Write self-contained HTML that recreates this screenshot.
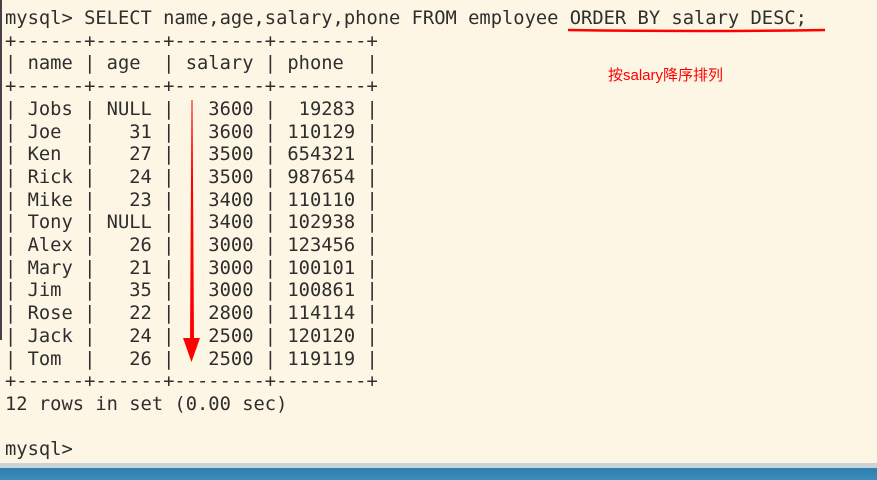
<!DOCTYPE html>
<html><head><meta charset="utf-8"><style>
html,body{margin:0;padding:0}
body{width:877px;height:480px;background:#fdf6e4;position:relative;overflow:hidden}
pre{position:absolute;left:5px;top:8px;margin:0;font-family:"DejaVu Sans Mono","Liberation Mono",monospace;font-size:18.6px;line-height:22.7px;color:#2e2e2e;transform:scaleX(1.009);transform-origin:0 0}
.lb{position:absolute;left:0;top:0;width:2px;height:340px;background:#444}
.bar1{position:absolute;left:0;top:463px;width:877px;height:5px;background:#c9d3d8}
.bar2{position:absolute;left:0;top:468px;width:877px;height:12px;background:linear-gradient(#2f7fae,#3a8cba)}
.note{position:absolute;left:608px;top:64px;font-family:"Liberation Sans","Noto Sans CJK SC",sans-serif;font-size:15px;color:#f00}
</style></head><body>
<div class="lb"></div>
<pre>mysql&gt; SELECT name,age,salary,phone FROM employee ORDER BY salary DESC;
+------+------+--------+--------+
| name | age  | salary | phone  |
+------+------+--------+--------+
| Jobs | NULL |   3600 |  19283 |
| Joe  |   31 |   3600 | 110129 |
| Ken  |   27 |   3500 | 654321 |
| Rick |   24 |   3500 | 987654 |
| Mike |   23 |   3400 | 110110 |
| Tony | NULL |   3400 | 102938 |
| Alex |   26 |   3000 | 123456 |
| Mary |   21 |   3000 | 100101 |
| Jim  |   35 |   3000 | 100861 |
| Rose |   22 |   2800 | 114114 |
| Jack |   24 |   2500 | 120120 |
| Tom  |   26 |   2500 | 119119 |
+------+------+--------+--------+
12 rows in set (0.00 sec)

mysql&gt;</pre>
<svg width="877" height="480" style="position:absolute;left:0;top:0">
<path d="M568 30 Q700 32 825 30" stroke="#f00" stroke-width="2.5" fill="none"/>
<polygon points="191.5,100 192.5,100 194,340 190,340" fill="#f00"/>
<polygon points="183,338 200,338 191.5,362" fill="#f00"/>
</svg>
<div class="note">按salary降序排列</div>
<div class="bar1"></div><div class="bar2"></div>
</body></html>
